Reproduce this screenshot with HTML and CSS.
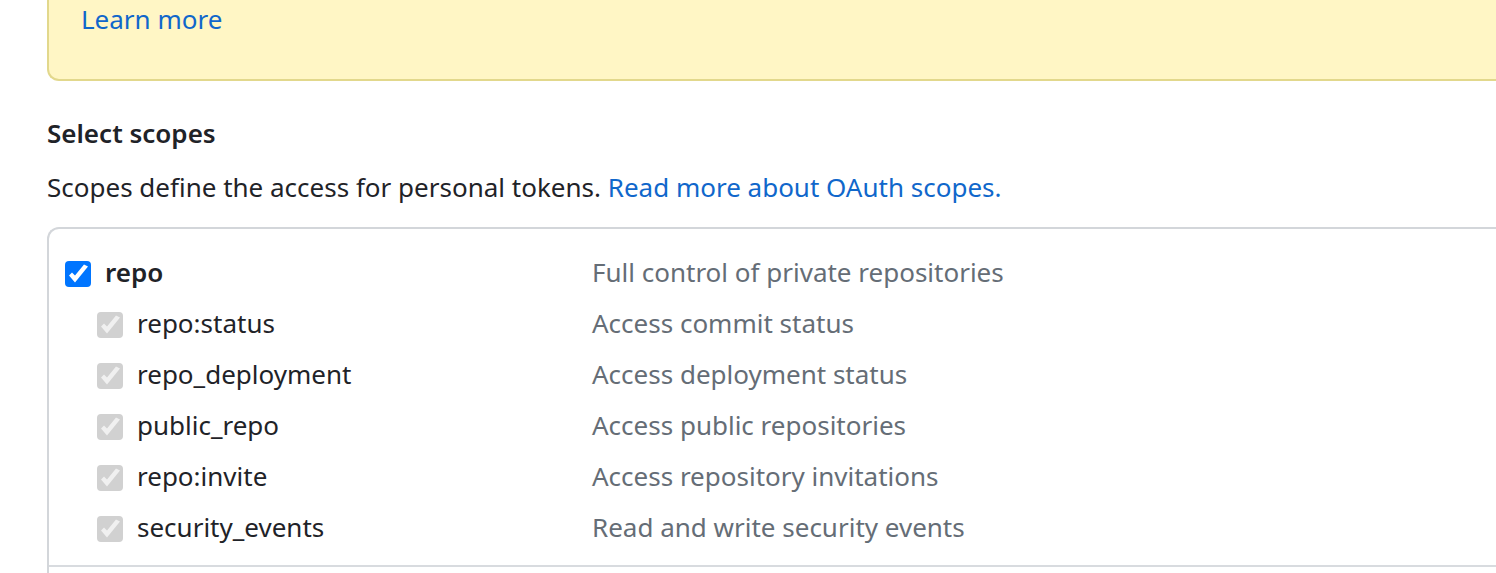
FILE: index.html
```html
<!DOCTYPE html>
<html lang="en">
<head>
<meta charset="utf-8">
<title>Select scopes</title>
<link rel="stylesheet" href="styles.css">
</head>
<body>
<main class="page">
<div class="flash"><a class="link" href="#">Learn more</a></div>
<section class="scopes">
<h2 class="heading">Select scopes</h2>
<p class="intro">Scopes define the access for personal tokens. <a class="link" href="#">Read more about OAuth scopes.</a></p>
<div class="box">
<ul class="group">
<li class="row"><label class="scope parent"><input class="check" type="checkbox" checked>repo</label><span class="desc">Full control of private repositories</span></li>
<li class="row"><label class="scope child"><input class="check" type="checkbox" checked disabled>repo:status</label><span class="desc">Access commit status</span></li>
<li class="row"><label class="scope child"><input class="check" type="checkbox" checked disabled>repo_deployment</label><span class="desc">Access deployment status</span></li>
<li class="row"><label class="scope child"><input class="check" type="checkbox" checked disabled>public_repo</label><span class="desc">Access public repositories</span></li>
<li class="row"><label class="scope child"><input class="check" type="checkbox" checked disabled>repo:invite</label><span class="desc">Access repository invitations</span></li>
<li class="row"><label class="scope child"><input class="check" type="checkbox" checked disabled>security_events</label><span class="desc">Read and write security events</span></li>
</ul>
</div>
</section>
</main>
</body>
</html>
```
FILE: styles.css
```css
* { box-sizing: border-box; }
body {
  margin: 0;
  background: #fff;
  color: #1f2328;
  font-family: "Segoe UI", "Noto Sans", "Open Sans", sans-serif;
  font-size: 26px;
  line-height: 38px;
  overflow: hidden;
}
.page { padding-left: 47px; }
.link { color: #1067cb; text-decoration: none; }
.flash {
  padding: 0 32px 41px;
  border: 2px solid #e2d88c;
  border-width: 0 0 2px 2px;
  border-bottom-left-radius: 12px;
  background: #fff6c5;
}
.scopes { padding-top: 33px; }
.heading { margin: 0; font-size: 26px; font-weight: 600; }
.intro { margin: 16px 0 21px; }
.box {
  padding-bottom: 16px;
  border: 2px solid #d3d6da;
  border-width: 2px 0 0 2px;
  border-top-left-radius: 12px;
}
.group {
  margin: 0;
  padding: 18px 0 12px 16px;
  border-bottom: 2px solid #d8dbdf;
  list-style: none;
}
.row {
  display: grid;
  grid-template-columns: 527px 1fr;
  line-height: 51px;
}
.scope { display: flex; align-items: center; gap: 14px; }
.parent { font-weight: 600; }
.child { padding-left: 32px; }
.check {
  appearance: none;
  width: 26px;
  height: 26px;
  margin: 2px 0 0;
  border-radius: 4px;
  background: #0075ff;
}
.check::before {
  content: "";
  display: block;
  height: 26px;
  background: #fff;
  clip-path: polygon(4px 15px, 7px 12px, 10px 15px, 19px 4px, 23px 6px, 10px 22px);
}
.check:not(:checked)::before { display: none; }
.check:disabled { background: #d1d1d1; }
.check:disabled::before { background: #f0f0f0; }
.desc { color: #656d76; }
```
